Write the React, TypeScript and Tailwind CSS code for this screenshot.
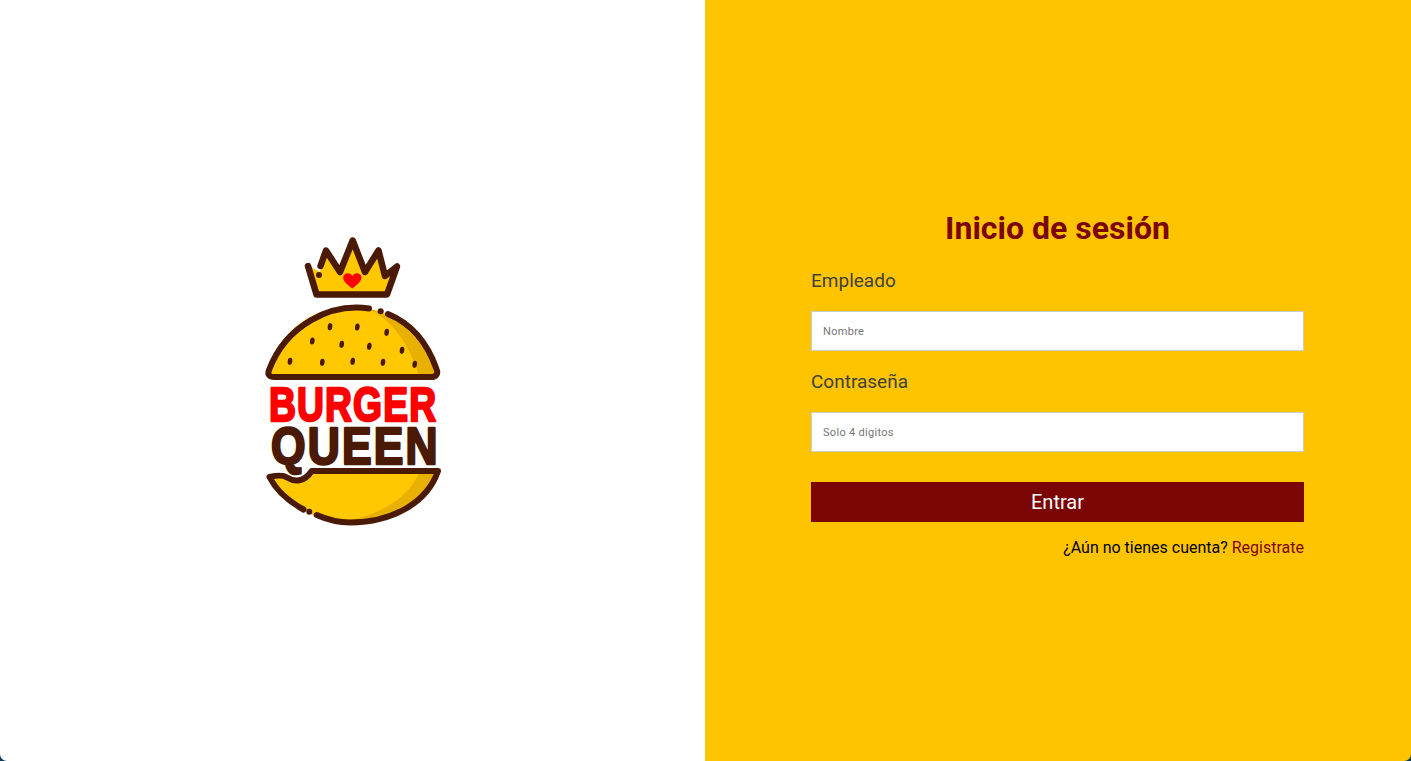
const SEEDS: [number, number][] = [
  [330, 326.7], [357.3, 327], [386.7, 332.3], [312.3, 341], [341.7, 344.3], [369.3, 346.3],
  [402, 350.3], [290, 361.3], [322.3, 362.3], [352.7, 361.3], [383, 362.3], [414.7, 364.3],
];

function Logo() {
  const brown = "#4a1a07";
  const gold = "#ffc800";
  const shade = "#e8b000";
  const font = "'Liberation Sans', Arial, sans-serif";
  return (
    <svg width={205} height={300} viewBox="250 231 205 300" aria-label="Burger Queen">
      {/* crown */}
      <path d="M308.5 266 L316.7 294 L387 294 L397 266.5 L385 275 L378.5 250 L365 272 L352.7 240 L340 272 L326 250 L320 272 Z" fill={gold} />
      <path d="M320.5 266 L326 250.5 L340 272 L352.7 240.5 L365 272 L378.5 250.5 L385 276 L397 266.5 L387 294.5 L316.5 294.5 L308 266" fill="none" stroke={brown} strokeWidth={6.5} strokeLinecap="round" strokeLinejoin="round" />
      <circle cx={319} cy={275} r={3} fill={brown} />
      <path d="M352.3 288.5 C347 284.5 343.2 281.5 343.2 277.6 C343.2 272.8 349.8 271.6 352.3 276 C354.8 271.6 361.4 272.8 361.4 277.6 C361.4 281.5 357.6 284.5 352.3 288.5 Z" fill="#ff0000" />

      {/* top bun */}
      <path d="M269 372 C276 335 310 307 350 307 C395 307 431 335 436 372 L436 377 L269 377 Z" fill={gold} />
      <path d="M369 309 C398 316 425 342 436 372 L436 376 L419 376 C410 345 392 320 369 309 Z" fill={shade} />
      <path d="M369 308.5 C330 303 286 325 269 370 C267 375 270 377 274 377 L431 377 C436 377 438.5 374 436.5 369 C427 342 410 323 388 314" fill="none" stroke={brown} strokeWidth={6} strokeLinecap="round" strokeLinejoin="round" />
      <circle cx={380.7} cy={311.3} r={3} fill={brown} />
      {SEEDS.map(([x, y]) => (
        <ellipse key={`${x}-${y}`} cx={x} cy={y} rx={2.3} ry={3.6} transform={`rotate(8 ${x} ${y})`} fill={brown} />
      ))}

      {/* words */}
      <text transform="translate(269 421) scale(0.76 1)" letterSpacing={1.5} fill="#ff0000" stroke="#ff0000" strokeWidth={2.5} strokeLinejoin="round" fontFamily={font} fontWeight={700} fontSize={49}>BURGER</text>
      <text transform="translate(271 464) scale(0.87 1)" letterSpacing={2.5} fill={brown} stroke={brown} strokeWidth={2.5} strokeLinejoin="round" fontFamily={font} fontWeight={700} fontSize={51}>QUEEN</text>

      {/* bottom bun */}
      <path d="M270 477 C277 476 284 475 289 479 C297 482 305 480 312 471 L437 471 C427 500 392 522 350 522 C315 522 285 505 270 477 Z" fill={gold} />
      <path d="M437 471 L420 471 C410 495 385 514 345 521 C395 526 427 500 437 471 Z" fill={shade} />
      <path d="M303.5 509.5 C288 501 276 490 269.5 477 C276 475.5 283 474.5 287 477.5 C296 483 305 481 311.7 471 L438 471 C427 503 392 522.5 350 522.5 C338 522.5 327 519.5 316.7 515" fill="none" stroke={brown} strokeWidth={6} strokeLinecap="round" strokeLinejoin="round" />
      <circle cx={309.3} cy={511.7} r={3} fill={brown} />
    </svg>
  );
}

function Field({ label, placeholder, className }: { label: string; placeholder: string; className: string }) {
  return (
    <div className={className}>
      <label className="block h-[21px] text-[19px] leading-[21px] text-[#404040]">{label}</label>
      <input
        placeholder={placeholder}
        className="mt-[20px] block h-[40px] w-full border border-[#cccccc] bg-white px-[11px] text-[11px] tracking-[0.3px] text-[#555555] placeholder:text-[#757575] outline-none"
      />
    </div>
  );
}

export default function App() {
  return (
    <div className="h-[761px] w-[1411px] overflow-hidden bg-[#0f3b57] font-['Roboto',sans-serif]">
      <div className="flex h-full w-full overflow-hidden rounded-b-[7px]">
        <div className="flex w-[705px] items-center justify-center bg-white">
          <Logo />
        </div>
        <div className="flex flex-1 items-center justify-center bg-[#ffc400] pt-[5px] pr-[1px]">
          <form className="w-[493px]">
            <h1 className="h-[37px] text-center text-[32px] leading-[39px] font-bold text-[#7b0505]">Inicio de sesión</h1>
            <Field className="mt-[24px]" label="Empleado" placeholder="Nombre" />
            <Field className="mt-[20px]" label="Contraseña" placeholder="Solo 4 digitos" />
            <button type="button" className="mt-[30px] block h-[40px] w-full bg-[#7b0505] text-[20px] text-white">Entrar</button>
            <p className="mt-[16px] h-[19px] text-right text-[16px] leading-[19px] text-black">
              ¿Aún no tienes cuenta? <a className="text-[#7b0505]">Registrate</a>
            </p>
          </form>
        </div>
      </div>
    </div>
  );
}
